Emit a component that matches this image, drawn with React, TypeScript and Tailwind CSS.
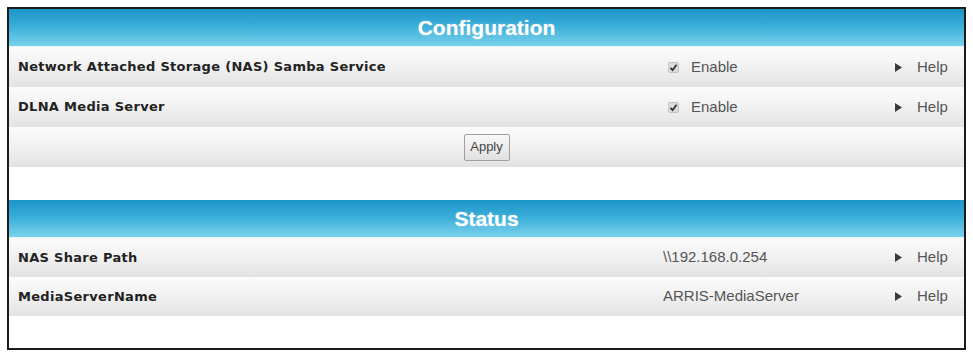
import React from 'react';

const rowBg = 'bg-gradient-to-b from-[#fbfbfb] via-[#f1f1f1] to-[#e2e2e2]';

function Header({ title }: { title: string }) {
  return (
    <div className="h-[38px] flex items-center justify-center bg-gradient-to-b from-[#1895c8] via-[#3db0db] to-[#79d2ec] border-b border-[#e8f7fc]">
      <span className="text-white font-bold text-[21px] leading-none font-['Liberation_Sans',Arial,sans-serif] [text-shadow:0_0_2px_rgba(255,255,255,0.4)]">
        {title}
      </span>
    </div>
  );
}

function CheckBox() {
  return (
    <span className="ml-[5px] w-[11px] h-[11px] bg-[#dcdcdc] border border-[#c4c4c4] rounded-[2px] flex items-center justify-center">
      <svg width="9" height="9" viewBox="0 0 9 9">
        <path d="M1.5 4.8 L3.6 7 L7.6 1.8" stroke="#333" strokeWidth="1.8" fill="none" />
      </svg>
    </span>
  );
}

function HelpLink() {
  return (
    <div className="w-[74px] flex items-center gap-[15px] pl-[5px]">
      <svg width="7" height="9" viewBox="0 0 7 9">
        <path d="M0 0 L7 4.5 L0 9 Z" fill="#3a3a3a" />
      </svg>
      <span className="text-[15px] text-[#555]">Help</span>
    </div>
  );
}

function Row({ label, children, h = 'h-[40px]' }: { label: string; children: React.ReactNode; h?: string }) {
  return (
    <div className={`${h} flex items-center ${rowBg}`}>
      <div className="flex-1 pl-[9px] text-[13px] tracking-[0.3px] font-bold text-[#222] font-['DejaVu_Sans',Verdana,sans-serif]">
        {label}
      </div>
      <div className="w-[227px] flex items-center text-[15px] text-[#555]">{children}</div>
      <HelpLink />
    </div>
  );
}

export default function App() {
  return (
    <div className="w-[973px] h-[353px] bg-white pt-[7px] pl-[7px] font-['Liberation_Sans',Arial,sans-serif]">
      <div className="w-[959px] h-[343px] border-2 border-[#1c1c1c] flex flex-col bg-white">
        <Header title="Configuration" />
        <Row label="Network Attached Storage (NAS) Samba Service">
          <CheckBox />
          <span className="ml-[12px]">Enable</span>
        </Row>
        <Row label="DLNA Media Server">
          <CheckBox />
          <span className="ml-[12px]">Enable</span>
        </Row>
        <div className={`h-[40px] flex items-center justify-center ${rowBg}`}>
          <button className="h-[27px] w-[46px] border border-[#a0a0a0] rounded-[2px] bg-gradient-to-b from-[#f8f8f8] to-[#e0e0e0] text-[13px] text-[#444]">
            Apply
          </button>
        </div>
        <div className="h-[33px]" />
        <Header title="Status" />
        <Row label="NAS Share Path" h="h-[39px]">
          <span>\\192.168.0.254</span>
        </Row>
        <Row label="MediaServerName" h="h-[39px]">
          <span>ARRIS-MediaServer</span>
        </Row>
      </div>
    </div>
  );
}
